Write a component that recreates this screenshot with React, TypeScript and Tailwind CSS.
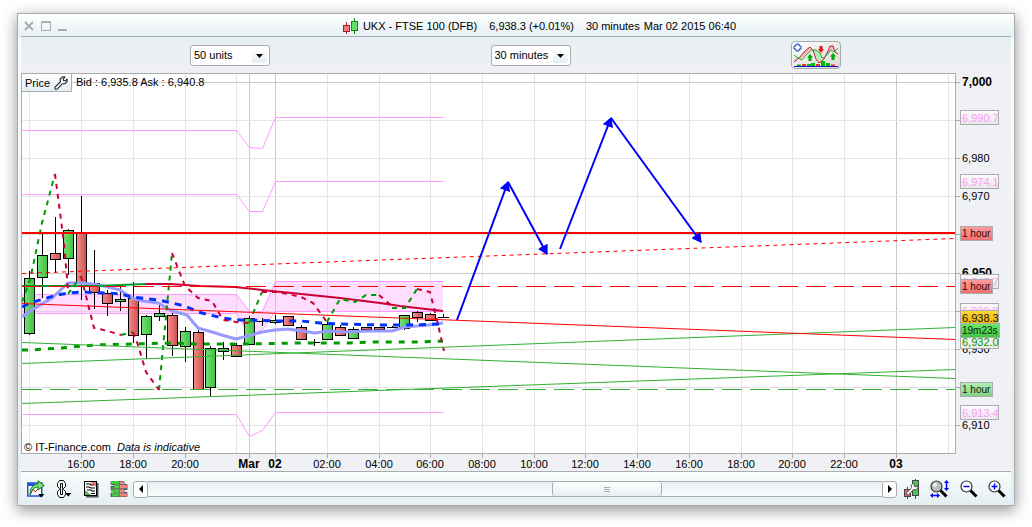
import type { ReactNode } from 'react';

type Candle = [x: number, open: number, close: number, high: number, low: number, up: boolean];

const candles: Candle[] = [
  [29, 278, 333, 271, 334, true],
  [42, 255, 277, 233, 297, true],
  [55, 253, 259, 217, 272, false],
  [68, 230, 258, 229, 274, true],
  [81, 233, 283, 196, 299, false],
  [94, 283, 292, 250, 308, false],
  [107, 293, 303, 290, 315, false],
  [120, 299, 301, 285, 310, true],
  [133, 298, 335, 282, 342, false],
  [146, 316, 334, 315, 358, true],
  [159, 313, 316, 303, 320, true],
  [172, 315, 345, 313, 355, false],
  [185, 331, 346, 327, 361, true],
  [198, 332, 389, 330, 389, false],
  [210, 348, 387, 346, 395, true],
  [223, 348, 351, 342, 359, true],
  [236, 345, 356, 343, 356, false],
  [249, 318, 344, 316, 344, true],
  [262, 321, 321, 318, 325, true],
  [275, 320, 322, 315, 323, true],
  [288, 316, 325, 316, 325, false],
  [301, 327, 339, 325, 339, false],
  [314, 342, 342, 339, 345, true],
  [327, 324, 339, 322, 339, true],
  [340, 327, 335, 325, 335, false],
  [353, 329, 338, 327, 338, true],
  [366, 327, 329, 327, 329, false],
  [379, 327, 329, 327, 329, false],
  [392, 327, 327, 326, 327, true],
  [404, 315, 328, 315, 329, true],
  [417, 312, 317, 311, 321, false],
  [430, 314, 320, 313, 320, false],
  [443, 317, 317, 314, 317, true],
];

const hours = [
  { x: 29 },
  { x: 81, label: '16:00' },
  { x: 133, label: '18:00' },
  { x: 185, label: '20:00' },
  { x: 236 },
  { x: 249, label: 'Mar', strong: true },
  { x: 275, label: '02', strong: true },
  { x: 327, label: '02:00' },
  { x: 379, label: '04:00' },
  { x: 430, label: '06:00' },
  { x: 482, label: '08:00' },
  { x: 534, label: '10:00' },
  { x: 585, label: '12:00' },
  { x: 637, label: '14:00' },
  { x: 689, label: '16:00' },
  { x: 741, label: '18:00' },
  { x: 792, label: '20:00' },
  { x: 844, label: '22:00' },
  { x: 896, label: '03', strong: true },
  { x: 948 },
];

const prices = [
  { y: 82, label: '7,000', strong: true },
  { y: 120 },
  { y: 158, label: '6,980' },
  { y: 196, label: '6,970' },
  { y: 234 },
  { y: 273, label: '6,950', strong: true },
  { y: 311 },
  { y: 349, label: '6,930' },
  { y: 387 },
  { y: 425, label: '6,910' },
];

const pivots = [
  '22,130 236,130 249,147 262,148 275,117 443,117',
  '22,194 236,194 249,211 262,211 275,181 443,181',
  '22,294 236,294 249,311 262,311 275,281 443,281',
  '22,313 236,313 249,335 262,329 275,311 443,311',
  '22,414 236,414 249,436 262,430 275,412 443,412',
];

const tags = [
  { y: 110, w: 38, label: '6,990.7', fill: 'url(#tagGrey)', color: '#ff99ff' },
  { y: 174, w: 38, label: '6,974.1', fill: 'url(#tagGrey)', color: '#ff99ff' },
  { y: 226, w: 32, label: '1 hour', fill: 'url(#tagRed)', color: '#330808', small: true },
  { y: 274, w: 38, label: '6,947.7', fill: 'url(#tagGrey)', color: '#ff99ff' },
  { y: 279, w: 32, label: '1 hour', fill: 'url(#tagRed)', color: '#330808', small: true },
  { y: 303, w: 38, label: '6,939.8', fill: 'url(#tagGrey)', color: '#ff99ff' },
  { y: 334, w: 38, label: '6,932.0', fill: 'url(#tagGrey)', color: '#009900' },
  { y: 310, w: 38, label: '6,938.3', fill: 'url(#tagGold)', color: '#111111' },
  { y: 323, w: 39, label: '19m23s', fill: 'url(#tagGreen)', color: '#082808', small: true },
  { y: 382, w: 32, label: '1 hour', fill: 'url(#tagPale)', color: '#082808', small: true },
  { y: 405, w: 38, label: '6,913.4', fill: 'url(#tagGrey)', color: '#ff99ff' },
];

function Gradient({ id, from, to, flat }: { id: string; from: string; to: string; flat?: boolean }) {
  return (
    <linearGradient id={id} x1="0" y1="0" x2={flat ? '1' : '0'} y2={flat ? '0' : '1'}>
      <stop offset="0" stopColor={from} />
      <stop offset="1" stopColor={to} />
    </linearGradient>
  );
}

function CandleShape({ candle }: { candle: Candle }) {
  const [x, top, bottom, high, low, up] = candle;
  return (
    <g stroke="#000" strokeWidth="1">
      <line x1={x + 0.5} x2={x + 0.5} y1={high} y2={low + 1} />
      {top === bottom ? (
        <line x1={x - 5} x2={x + 6} y1={top + 0.5} y2={top + 0.5} />
      ) : (
        <rect x={x - 4.5} y={top + 0.5} width="10" height={bottom - top} fill={up ? 'url(#bull)' : 'url(#bear)'} />
      )}
    </g>
  );
}

function Chart() {
  return (
    <svg viewBox="21 73 990 398" className="block w-full" role="img" aria-label="FTSE 100 price chart">
      <defs>
        <Gradient id="bull" from="#77e077" to="#3fc03f" flat />
        <Gradient id="bear" from="#f88c8c" to="#cc5050" flat />
        <Gradient id="tagGrey" from="#fbfbfb" to="#e9e9e9" />
        <Gradient id="tagRed" from="#ff9c9c" to="#ee7070" />
        <Gradient id="tagGold" from="#ffd83a" to="#f0b400" />
        <Gradient id="tagGreen" from="#6fe66f" to="#3fc43f" />
        <Gradient id="tagPale" from="#b4f0b4" to="#86cf86" />
        <marker id="head" viewBox="0 0 9 10" refX="8" refY="5" markerWidth="10" markerHeight="11" markerUnits="userSpaceOnUse" orient="auto">
          <path d="M0 0 L9 5 L0 10 Z" fill="#0000ff" />
        </marker>
        <clipPath id="plot">
          <rect x="22" y="74" width="933" height="379" />
        </clipPath>
      </defs>

      <rect x="21" y="73" width="990" height="398" fill="#f0f1f4" />
      <rect x="21.5" y="73.5" width="934" height="380" fill="#fff" stroke="#a9adb0" />

      {/* grid */}
      {hours.map((h) => (
        <line key={h.x} x1={h.x + 0.5} x2={h.x + 0.5} y1="74" y2="453" stroke={h.strong ? '#cacaca' : '#e5e5e5'} />
      ))}
      {prices.map((p) => (
        <line key={p.y} x1="22" x2="955" y1={p.y + 0.5} y2={p.y + 0.5} stroke={p.strong ? '#cacaca' : '#e5e5e5'} />
      ))}

      <g clipPath="url(#plot)" fill="none">
        {/* pivots */}
        <polygon
          points="22,294 236,294 249,311 262,311 275,281 443,281 443,311 275,311 262,329 249,335 236,313 22,313"
          fill="#ff99ff"
          fillOpacity="0.33"
        />
        <g transform="translate(0.5 0.5)" stroke="#ff99ff">
          {pivots.map((points) => <polyline key={points} points={points} />)}
        </g>

        {candles.map((c) => <CandleShape key={c[0]} candle={c} />)}

        {/* moving averages */}
        <g strokeWidth="3" strokeLinejoin="round">
          <polyline
            stroke="#9999ff"
            points="22,317 30,311 52,298 68,283 82,283 93,284 108,287 120,290 132,298 143,301 158,303 172,311 187,315 198,328 212,332 225,336 236,339 248,336 262,332 275,330 288,329 302,331 315,333 328,331 345,332 368,331 392,331 405,327 428,325 443,323"
          />
          <polyline
            stroke="#0033ff"
            strokeDasharray="7 6"
            points="22,307 30,303 57,295 68,293 82,292 107,293 120,294 132,297 159,300 172,303 185,306 198,312 210,315 223,318 236,320 249,320 275,321 301,321 320,323 340,324 380,325 405,325 443,324"
          />
          <polyline
            stroke="#009900"
            strokeDasharray="6 7"
            points="22,350 30,350 60,348 95,345 133,344 172,343 200,344 249,344 300,343 350,343 370,342 420,342 443,341"
          />
        </g>
        <g strokeWidth="2">
          <polyline stroke="#009933" points="22,286 95,286 120,285 146,284" />
          <polyline stroke="#cc0033" points="146,284 170,284 200,286 235,287 262,290 301,294 340,298 380,303 400,306 443,311" />
        </g>

        {/* zig-zag indicator, green on the way up and red on the way down */}
        <g strokeWidth="2" strokeDasharray="5 5">
          <g stroke="#009900">
            <polyline points="22,302 30,280 42,223 55,174" />
            <polyline points="68,294 81,276" />
            <polyline points="121,335 133,332" />
            <polyline points="159,390 172,253" />
            <polyline points="249,323 262,292" />
            <polyline points="327,322 340,299 355,302 366,295 379,295" />
            <polyline points="392,308 405,308 417,289" />
          </g>
          <g stroke="#cc0033">
            <polyline points="55,174 64,243 68,290" />
            <polyline points="81,276 94,328 108,331 121,335" />
            <polyline points="133,332 138,345 146,372 159,390" />
            <polyline points="172,253 185,286 198,298 212,301 223,320 236,322 249,323" />
            <polyline points="262,292 275,292 288,294 301,297 313,303 327,322" />
            <polyline points="379,295 392,306" />
            <polyline points="417,289 430,292 437,320 444,351" />
          </g>
        </g>

        {/* trend lines */}
        <g stroke="#33b033">
          <line x1="22" y1="342.5" x2="955" y2="378.5" />
          <line x1="22" y1="363.5" x2="955" y2="327.5" />
          <line x1="22" y1="403.5" x2="955" y2="369.5" />
          <line x1="22" y1="389.5" x2="955" y2="389.5" strokeDasharray="20 8" />
        </g>
        <g stroke="#ff0000">
          <line x1="22" y1="303.5" x2="955" y2="339.5" />
          <line x1="22" y1="273.5" x2="955" y2="238.5" strokeDasharray="4 4" />
          <line x1="22" y1="286.5" x2="955" y2="286.5" strokeDasharray="20 8" />
          <line x1="22" y1="233" x2="955" y2="233" strokeWidth="2" />
        </g>

        {/* projection */}
        <g stroke="#0000ff" strokeWidth="2">
          <line x1="457" y1="320" x2="508" y2="182" markerEnd="url(#head)" />
          <line x1="508" y1="182" x2="547" y2="254" markerEnd="url(#head)" />
          <line x1="560" y1="249" x2="611" y2="118" markerEnd="url(#head)" />
          <line x1="611" y1="118" x2="701" y2="242" markerEnd="url(#head)" />
        </g>
      </g>

      {/* axes */}
      {hours.filter((h) => h.label).map((h) => (
        <g key={h.x}>
          <line x1={h.x + 0.5} x2={h.x + 0.5} y1="454" y2="458" stroke="#a9adb0" />
          <text x={h.x} y="468" textAnchor="middle" fontSize={h.strong ? 12 : 11} fontWeight={h.strong ? 700 : 400}>
            {h.label}
          </text>
        </g>
      ))}
      {prices.map((p) => (
        <g key={p.y}>
          <line x1="956" x2="960" y1={p.y + 0.5} y2={p.y + 0.5} stroke="#a9adb0" />
          {p.label && (
            <text x="962" y={p.y + 4} fontSize={p.strong ? 12 : 11} fontWeight={p.strong ? 700 : 400}>
              {p.label}
            </text>
          )}
        </g>
      ))}
      {tags.map((t) => (
        <g key={t.y}>
          <rect x="960.5" y={t.y + 0.5} width={t.w} height="14" fill={t.fill} stroke="#a9adb0" />
          <text x="962" y={t.y + (t.small ? 11 : 12)} fontSize={t.small ? 10 : 11} fill={t.color}>{t.label}</text>
        </g>
      ))}

      <text x="76" y="86" fontSize="11">Bid : 6,935.8 Ask : 6,940.8</text>
      <text x="24" y="451" fontSize="11">© IT-Finance.com</text>
      <text x="117" y="451" fontSize="11" fontStyle="italic">Data is indicative</text>
    </svg>
  );
}

function WrenchIcon() {
  return (
    <svg width="14" height="14" viewBox="0 0 14 14" fill="#fff" stroke="#222" strokeWidth="1.1" strokeLinejoin="round">
      <path d="M8.5 0.8 L11 1 L9.2 3.2 L9.6 4.6 L11 5 L13.1 3.2 L13.2 5.6 L11.2 7.6 L8.4 7.8 L3 13.2 L1.2 13.2 L0.8 11.4 L6.3 6 L6.3 3 Z" />
    </svg>
  );
}

function IconButton({ label, children }: { label: string; children: ReactNode }) {
  return (
    <button type="button" aria-label={label} className="shrink-0">
      {children}
    </button>
  );
}

function SelectBox({ label, value, options }: { label: string; value: string; options: string[] }) {
  return (
    <div className="relative">
      <select
        aria-label={label}
        defaultValue={value}
        className="block h-[21px] w-20 appearance-none rounded-[3px] border border-[#a9adb0] bg-white pl-[3px] text-[11px] leading-[19px] text-black"
      >
        {options.map((o) => <option key={o}>{o}</option>)}
      </select>
      <span className="pointer-events-none absolute top-1 right-[3px] flex h-[14px] w-[15px] items-center justify-center rounded-xs bg-gradient-to-b from-white to-[#e4eef3]">
        <svg width="7" height="4" viewBox="0 0 7 4"><path d="M0 0 H7 L3.5 4 Z" /></svg>
      </span>
    </div>
  );
}

function TitleBar() {
  return (
    <header className="flex h-[23px] items-center border-b border-[#a9adb0] pt-0.5 pl-[3px]">
      <div className="flex gap-[7px]">
        <IconButton label="Close">
          <svg className="block" width="10" height="10" viewBox="0 0 10 10" stroke="#a9adb0" strokeWidth="2"><path d="M1 1 L9 9 M9 1 L1 9" /></svg>
        </IconButton>
        <IconButton label="Maximize">
          <svg className="block" width="10" height="10" viewBox="0 0 10 10" fill="none" stroke="#a9adb0"><path d="M0.5 0.5 H9.5 V9.5 H0.5 Z M1 1.5 H9" /></svg>
        </IconButton>
        <IconButton label="Minimize">
          <svg className="block" width="10" height="10" viewBox="0 0 10 10" fill="#a9adb0"><path d="M0 8 H9 V10 H0 Z" /></svg>
        </IconButton>
      </div>
      <div className="flex flex-1 items-center justify-center whitespace-pre">
        <svg className="mr-1" width="16" height="16" viewBox="0 0 16 16">
          <path d="M3.5 4 V16" stroke="#aa2222" />
          <rect x="0.5" y="7.5" width="6" height="6" fill="#ee7777" stroke="#aa2222" />
          <path d="M11.5 0 V16" stroke="#118811" />
          <rect x="8.5" y="3.5" width="6" height="9" fill="#66e066" stroke="#118811" />
        </svg>
        <h1>UKX - FTSE 100 (DFB)</h1>
        <span className="ml-3">6,938.3 (+0.01%)</span>
        <span className="ml-3">30 minutes</span>
        <span className="ml-1">Mar 02 2015 06:40</span>
      </div>
    </header>
  );
}

function IndicatorsIcon() {
  return (
    <svg className="block" width="46" height="24" viewBox="0 0 46 24">
      <path d="M1 19 L6 15 L12 8 L17 4 L21 8 L24 13 L22 9 L19 6 L13 11 L8 16 L3 14 Z" fill="#f4b8b8" />
      <path d="M19 6 L23 7 L28 12 L29 17 L25 18 L21 9 Z" fill="#b2ecb2" />
      <path d="M34 10 L37 3 L41 3 L42 8 L39 6 L33 14 Z" fill="#f4b8b8" />
      <path d="M1 19 L6 15 L12 8 L17 4 L20 7 L23 16 L26 20 L31 16 L35 8 L37 3 L40 3 L42 9 L45 11" fill="none" stroke="#bb2233" />
      <path d="M1 12 L5 15 L9 17 L13 12 L19 7 L23 7 L27 10 L29 15 L32 14 L38 7 L41 9 L45 5" fill="none" stroke="#22aa22" />
      <path d="M3 1 H6 V3 H8 V6 H6 V8 H3 V6 H1 V3 H3 Z" fill="#fff" stroke="#1144aa" />
      <path d="M17 11 L20 14.500 H18.500 V18 H15.500 V14.500 H14 Z M40 10 L43 13.500 H41.500 V17 H38.500 V13.500 H37 Z" fill="#00aa00" />
      <path d="M26.500 3 H29.500 V6 H31 L28 10 L25 6 H26.500 Z" fill="#ee1111" />
      <path d="M4 21.500 H8 V23 H4 Z M14 21 H18 V23 H14 Z M18 20 H22 V23 H18 Z M28 18 H32 V23 H28 Z M33 20 H37 V23 H33 Z" fill="#00bb00" />
      <path d="M9 21 H13 V23 H9 Z M23 21 H27 V23 H23 Z M38 21.500 H42 V23 H38 Z" fill="#dd3333" />
      <path d="M1 23.500 H45" stroke="#1111cc" />
    </svg>
  );
}

function Toolbar() {
  return (
    <div className="flex h-9 items-center justify-between bg-gradient-to-b from-[#e6eff3] to-[#f0f0f3] pr-[170px] pl-[169px]">
      <SelectBox label="Units" value="50 units" options={['50 units', '100 units', '200 units']} />
      <SelectBox label="Timeframe" value="30 minutes" options={['30 minutes', '1 hour', '4 hours']} />
      <button
        type="button"
        aria-label="Indicators"
        className="rounded-[4px] border border-[#a9adb0] bg-gradient-to-br from-white to-[#d8d8d8] p-px"
      >
        <IndicatorsIcon />
      </button>
    </div>
  );
}

function Magnifier({ children, filled }: { children?: ReactNode; filled?: boolean }) {
  return (
    <>
      <path d="M10.500 10.500 L16.500 16.500" stroke="#000" strokeWidth="3" />
      <circle cx="6.500" cy="6.500" r="5.500" fill={filled ? '#bdbdbd' : '#fff'} stroke="#333" strokeWidth="1.200" />
      {children}
    </>
  );
}

function ScrollBar() {
  const button = 'flex h-[17px] w-[15px] items-center justify-center rounded-[3px] border border-[#a9adb0] bg-white';
  return (
    <div className="flex min-w-0 flex-1 items-center">
      <button type="button" aria-label="Scroll left" className={button}>
        <svg width="4" height="8" viewBox="0 0 4 8"><path d="M4 0 V8 L0 4 Z" /></svg>
      </button>
      <div className="h-4 flex-1 border-y border-[#a9adb0] bg-gradient-to-b from-[#e8eff3] to-[#fafefe]">
        <div className="ml-[55%] flex h-[14px] w-[15%] items-center justify-center rounded-[3px] border-x border-[#a9adb0] bg-gradient-to-b from-white to-[#e6eff3]">
          <svg width="6" height="5" viewBox="0 0 6 5" stroke="#a9adb0"><path d="M0 0.500 H6 M0 2.500 H6 M0 4.500 H6" /></svg>
        </div>
      </div>
      <button type="button" aria-label="Scroll right" className={button}>
        <svg width="4" height="8" viewBox="0 0 4 8"><path d="M0 0 V8 L4 4 Z" /></svg>
      </button>
    </div>
  );
}

function BottomBar() {
  return (
    <footer className="flex h-[34px] items-center border-t border-[#a9adb0] bg-gradient-to-b from-[#fafefe] to-[#e4edf1] pt-px pr-[5px] pl-[6px]">
      <div className="mr-[5px] flex gap-[11px]">
        <IconButton label="Export chart">
          <svg className="block" width="18" height="18" viewBox="0 0 18 18">
            <rect x="0.750" y="3" width="14" height="13" fill="#fff" stroke="#2255cc" strokeWidth="1.500" />
            <path d="M1 4.500 H8" stroke="#2255cc" strokeWidth="3" />
            <path d="M3 15 L6 9 L8 12 L12 8" fill="none" stroke="#cc2222" />
            <path d="M3 15 C3 8 6 4 11 4 V0.700 L17.300 5.500 L11 10 V7 C7 7 5 10 3 15 Z" fill="#77dd77" stroke="#117722" />
            <path d="M11 14 H17.500 L14.200 17.500 Z" />
          </svg>
        </IconButton>
        <IconButton label="Link charts">
          <svg className="block" width="16" height="18" viewBox="0 0 16 18">
            <g fill="#fff" stroke="#000">
              <path d="M1.500 6.500 V3.500 L3.500 0.500 H7.500 L9.500 3.500 V6.500 L7.500 8.500 H6.500 V3.500 H4.500 V8.500 H3.500 Z" />
              <path d="M1.500 11.500 V14.500 L3.500 17.500 H7.500 L9.500 14.500 V11.500 L7.500 9.500 H6.500 V14.500 H4.500 V9.500 H3.500 Z" />
            </g>
            <path d="M9 13 H15.500 L12.200 16.500 Z" />
          </svg>
        </IconButton>
        <IconButton label="Order book">
          <svg className="block" width="16" height="18" viewBox="0 0 16 18">
            <path d="M3 3 H15.500 V17.500 H3 Z" fill="#555" />
            <rect x="1.500" y="1.500" width="12" height="14" fill="#fff" stroke="#000" />
            <path d="M7 2 H13 V7 Z" fill="#ee7777" />
            <path d="M2 10 L8 15 H2 Z" fill="#44bb44" />
            <path d="M3 4 H7 L8 5 H11 M3 7 H6 L8 8 H12 M4 10 H8 L9 11 H12 M8 13.500 H12" fill="none" stroke="#000" strokeWidth="1.200" />
          </svg>
        </IconButton>
        <IconButton label="Market depth">
          <svg className="block" width="18" height="18" viewBox="0 0 18 18">
            <path d="M1 1.500 H14 V4.500 H17 V9.500 H14 V12.500 H17 V16.500 H1 V13.500 H4 V9.500 H1 V6.500 H4 V4.500 H1 Z" fill="#777" stroke="#555" />
            <path d="M1 1 H9 V4 H1 Z M4 5 H9 V8 H4 Z M1 9.500 H9 V12.500 H1 Z M2 13.500 H9 V16.500 H2 Z" fill="#44cc44" />
            <path d="M10 1.500 H14 V4 H10 Z M10 5 H17 V8 H10 Z M10 9.500 H14 V12.500 H10 Z M10 13.500 H17 V16.500 H10 Z" fill="#f58080" />
          </svg>
        </IconButton>
      </div>
      <ScrollBar />
      <div className="ml-[7px] flex items-center gap-[10px]">
        <IconButton label="Chart settings">
          <svg className="block" width="16" height="20" viewBox="0 0 16 20">
            <path d="M3.500 8 V20 M11.500 0 V20" stroke="#444" />
            <rect x="0.500" y="10.500" width="6" height="7" fill="#ee6666" stroke="#444" />
            <rect x="8.500" y="1.500" width="6" height="15" fill="#44cc55" stroke="#444" />
            <path d="M8.800 4.500 L10.500 5 L10 7 L11.500 8 L13.500 6.500 L14 9 L12 11 L9.500 10.500 L4.500 16 L2.800 15.500 L2.500 14 L7.500 8.800 L7.200 6 Z" fill="#fff" stroke="#333" strokeWidth="0.800" />
          </svg>
        </IconButton>
        <IconButton label="Fit zoom">
          <svg className="block" width="20" height="18" viewBox="0 0 20 18">
            <Magnifier filled />
            <circle cx="5" cy="5" r="2" fill="#eee" />
            <path d="M16.500 2 V9 M2 15.500 H9" stroke="#0000ff" strokeWidth="1.500" />
            <path d="M14 3 L16.500 0 L19 3 Z M14 8 L16.500 11 L19 8 Z M3 13 L0 15.500 L3 18 Z M7 13 L10 15.500 L7 18 Z" fill="#0000ff" />
          </svg>
        </IconButton>
        <IconButton label="Zoom out">
          <svg className="block" width="18" height="18" viewBox="0 0 18 18">
            <Magnifier><path d="M3.500 6.500 H9.500" stroke="#0000ff" strokeWidth="1.500" /></Magnifier>
          </svg>
        </IconButton>
        <IconButton label="Zoom in">
          <svg className="block" width="18" height="18" viewBox="0 0 18 18">
            <Magnifier><path d="M3.500 6.500 H9.500 M6.500 3.500 V9.500" stroke="#0000ff" strokeWidth="1.500" /></Magnifier>
          </svg>
        </IconButton>
      </div>
    </footer>
  );
}

export default function App() {
  return (
    <div className="min-h-screen bg-white px-[17px] pt-[13px] pb-5 font-['Liberation_Sans',Arial,sans-serif] text-[11px] leading-4 text-black">
      <main className="border border-[#a9adb0] bg-gradient-to-b from-[#fafefe] to-[#e4edf1] shadow-[0_4px_14px_rgba(0,0,0,0.45)]">
        <div className="bg-gradient-to-b from-white to-[#e4eff3] bg-[length:100%_23px] bg-no-repeat px-[3px]">
          <TitleBar />
          <Toolbar />
          <div className="relative">
            <Chart />
            <button
              type="button"
              className="absolute top-0 left-0 flex h-[19px] items-center gap-1 border border-[#a9adb0] bg-gradient-to-b from-white to-[#e4eff3] px-[3px]"
            >
              Price
              <WrenchIcon />
            </button>
          </div>
          <BottomBar />
        </div>
      </main>
    </div>
  );
}
